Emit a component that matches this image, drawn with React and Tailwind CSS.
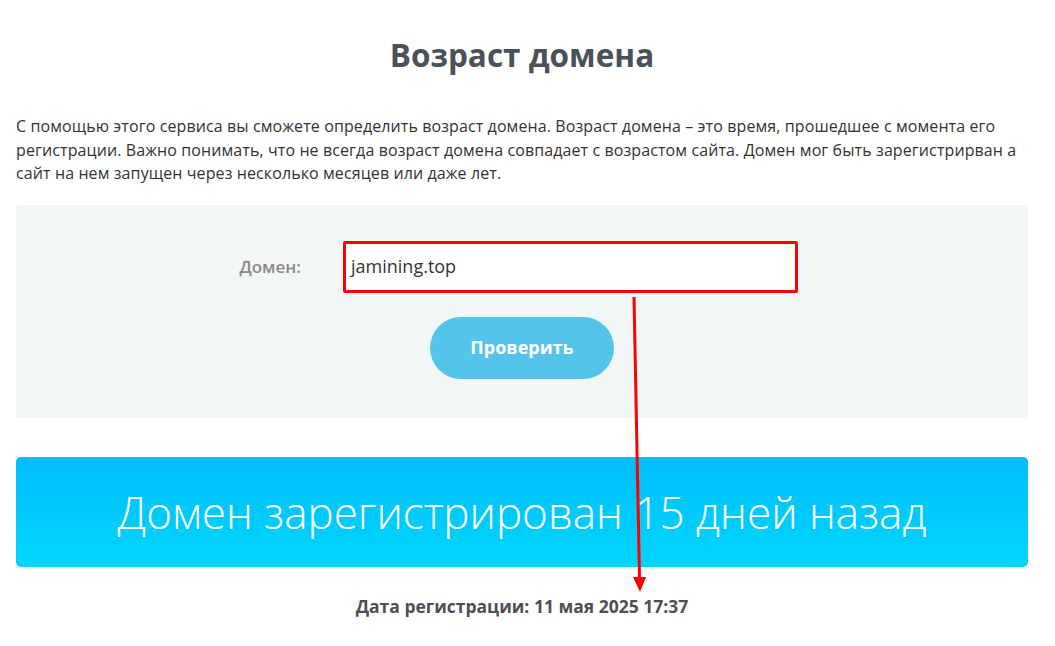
import React from "react";

export default function App() {
  return (
    <div className="relative w-[1055px] min-h-[646px] bg-white font-['Open_Sans',sans-serif]">
      <div className="pl-4 pr-[27px]">
        <h1 className="pt-[34px] text-center text-[31.5px] leading-[42px] font-bold text-[#4b5159]">
          Возраст домена
        </h1>
        <p className="mt-[39px] text-[16px] leading-[23.5px] tracking-[0.1px] text-[#333]">
          С помощью этого сервиса вы сможете определить возраст домена. Возраст домена – это время, прошедшее с момента его регистрации. Важно понимать, что не всегда возраст домена совпадает с возрастом сайта. Домен мог быть зарегистрирван а сайт на нем запущен через несколько месяцев или даже лет.
        </p>
        <div className="mt-[19px] h-[213px] rounded bg-[#f3f6f7] pt-[36px]">
          <div className="flex items-center">
            <label className="w-[327px] pr-[42px] text-right text-[17px] font-semibold text-[#8a8a8a]">
              Домен:
            </label>
            <div className="flex h-[52px] w-[455px] items-center rounded-[2px] border-[3px] border-[#ff0000] bg-white pl-[5px] text-[18px] text-[#333]">
              jamining.top
            </div>
          </div>
          <div className="mt-[24px] flex justify-center">
            <button className="h-[62px] w-[184px] rounded-full bg-[#55c4eb] text-[18px] font-bold text-white">
              Проверить
            </button>
          </div>
        </div>
        <div className="mt-[39px] flex h-[110px] items-center justify-center rounded-[5px] bg-gradient-to-b from-[#00bdfb] to-[#00d5fd]">
          <span className="text-[44px] font-light text-white">Домен зарегистрирован 15 дней назад</span>
        </div>
        <p className="mt-[26px] text-center text-[17.5px] font-bold text-[#4b5056]">
          Дата регистрации: 11 мая 2025 17:37
        </p>
      </div>
      <svg className="pointer-events-none absolute left-0 top-0" width="1055" height="646">
        <line x1="634" y1="297" x2="639.5" y2="578" stroke="#ff0000" strokeWidth="3" />
        <polygon points="633,577 646,577 640,592" fill="#ff0000" />
      </svg>
    </div>
  );
}
